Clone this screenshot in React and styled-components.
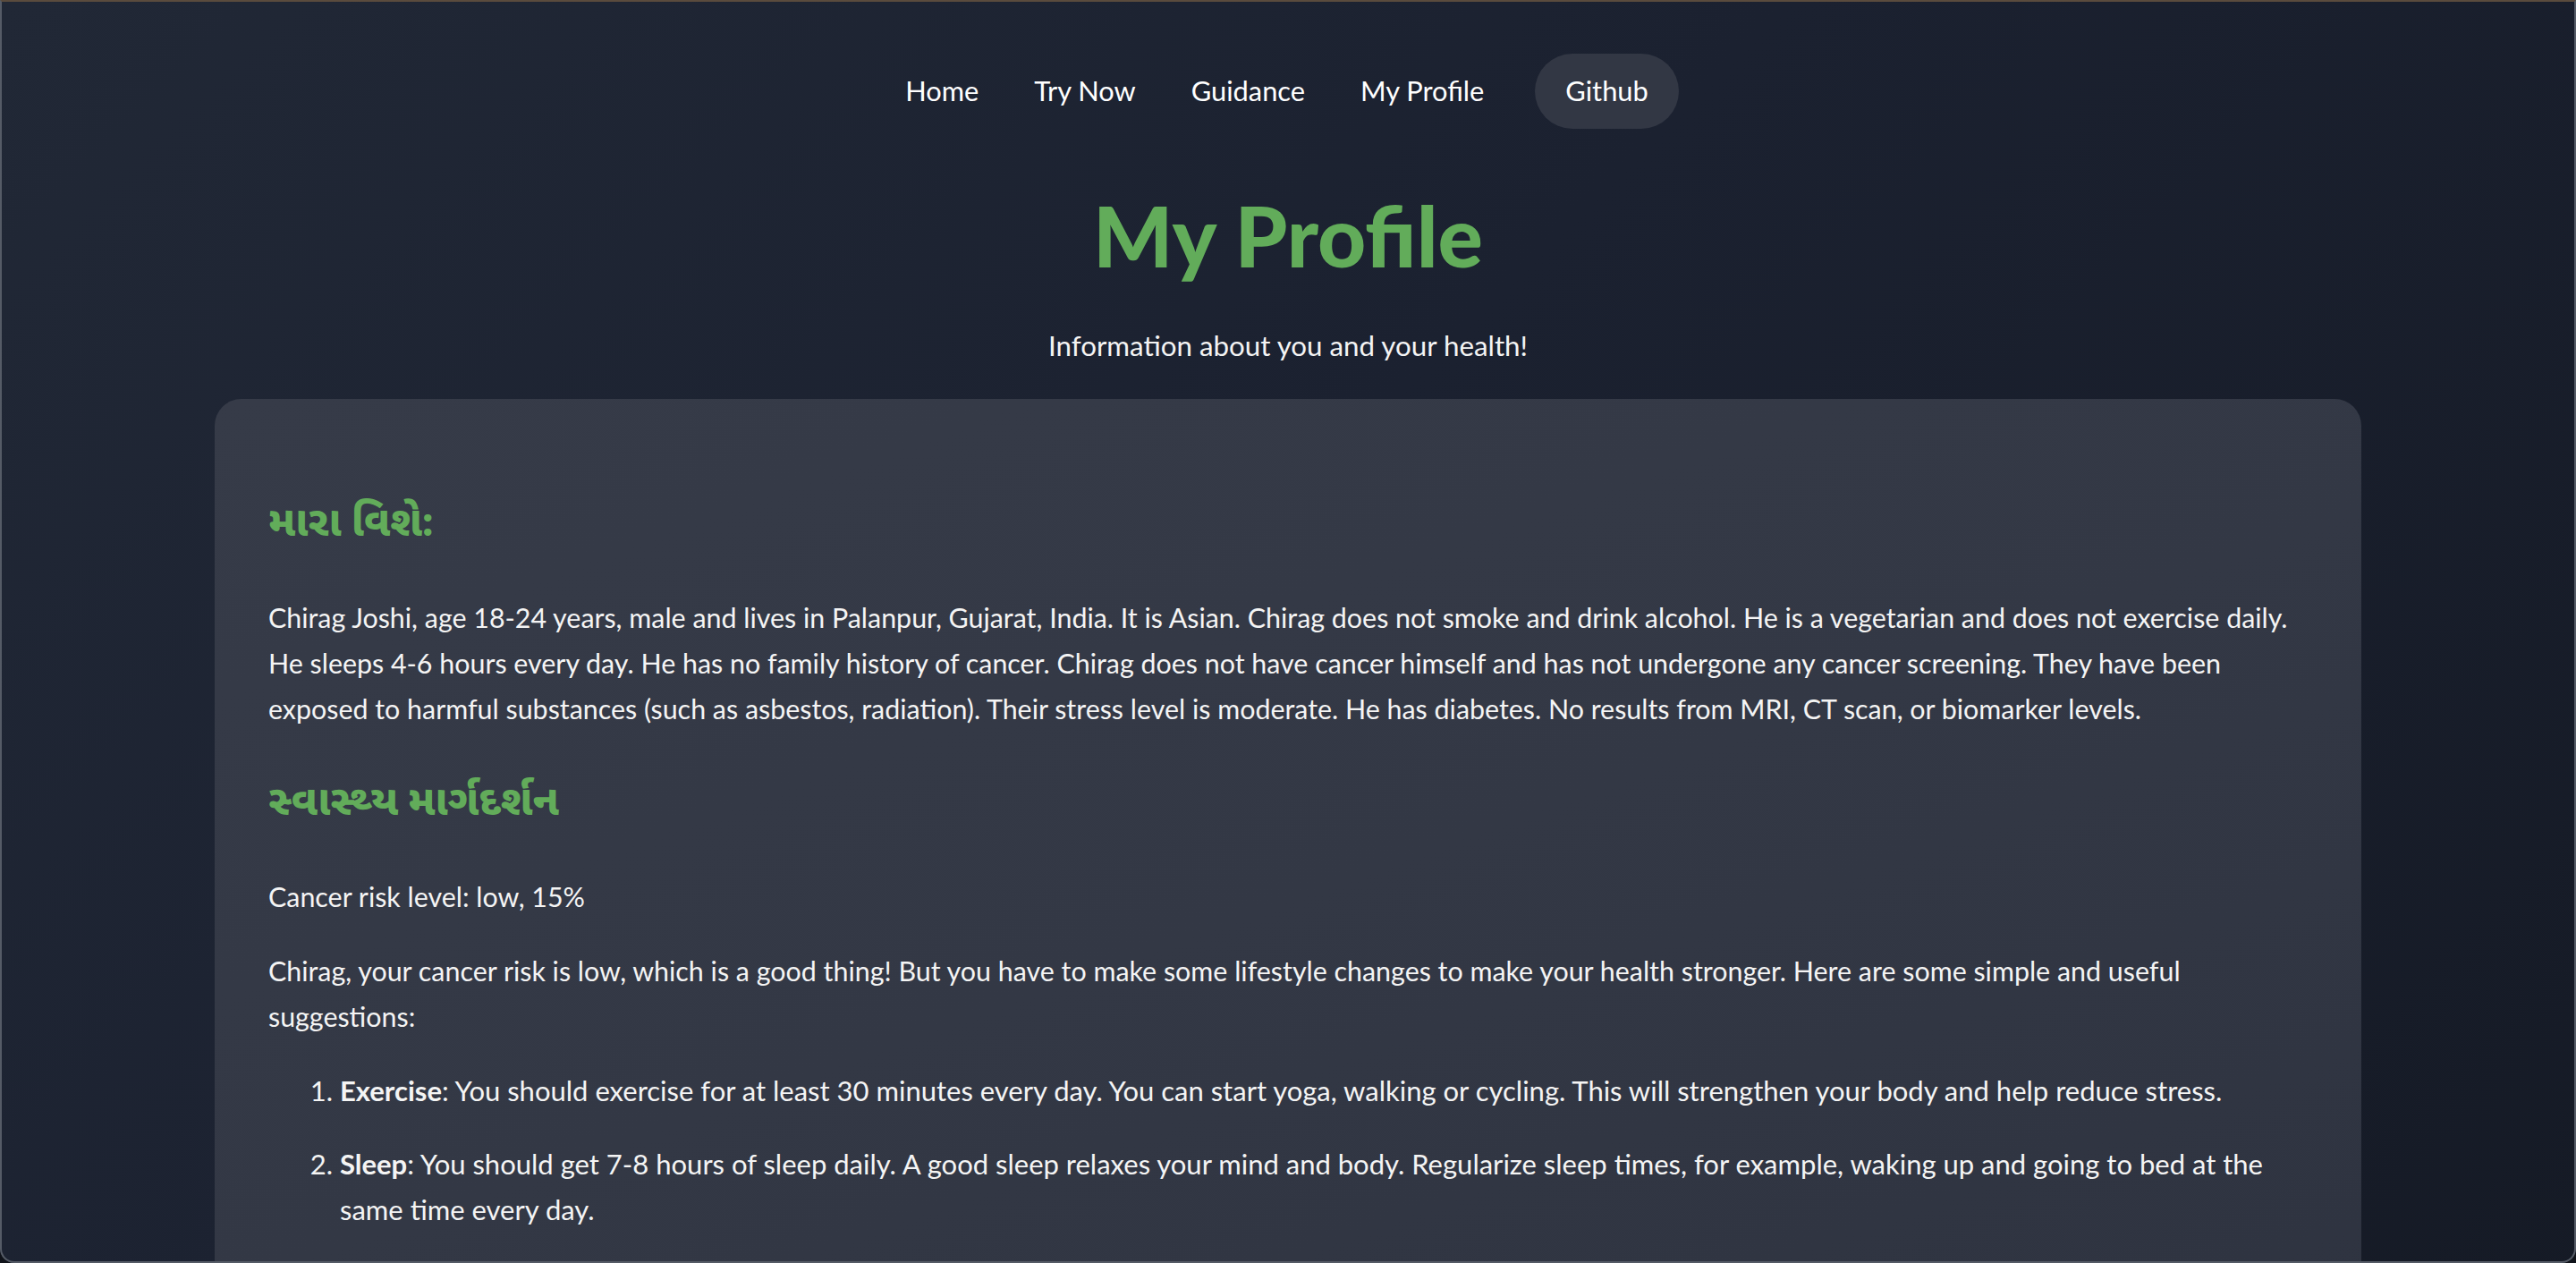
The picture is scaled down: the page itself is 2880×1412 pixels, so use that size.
import React from "react";
import styled, { createGlobalStyle } from "styled-components";

const Global = createGlobalStyle`
  html, body { margin: 0; padding: 0; background: #1b2130; }
  * { box-sizing: border-box; }
`;

const Frame = styled.div`
  position: fixed;
  inset: 0;
  pointer-events: none;
  border: 2px solid #555b66;
  border-top-color: #5a4b3d;
  border-radius: 0 0 16px 16px;
  box-shadow: 0 0 0 30px #10131a;
`;

const Page = styled.div`
  min-height: 100vh;
  background: linear-gradient(135deg, #212836 0%, #1b2130 45%, #151a25 100%);
  color: #f4f4f4;
  font-family: "Lato", "Noto Sans Gujarati", "Lohit Gujarati", "Noto Sans", sans-serif;
  display: flex;
  flex-direction: column;
  align-items: center;
  padding-top: 60px;
  overflow: hidden;
`;

const Nav = styled.nav`
  display: flex;
  align-items: center;
  margin-right: 22px;
`;

const NavLink = styled.a`
  display: block;
  padding: 0 ${(p) => (p.$active ? "34px" : "31px")};
  height: 84px;
  line-height: 84px;
  border-radius: 42px;
  font-size: 30.8px;
  color: #ffffff;
  text-decoration: none;
  background: ${(p) => (p.$active ? "#323744" : "transparent")};
  margin-left: ${(p) => (p.$active ? "26px" : "0")};
`;

const Title = styled.h1`
  margin: 64px 0 0;
  font-size: 94px;
  line-height: 110px;
  font-weight: 900;
  color: #62ac5a;
`;

const Subtitle = styled.p`
  margin: 46px 0 0;
  font-size: 31.3px;
  line-height: 45px;
`;

const Card = styled.section`
  margin-top: 37px;
  width: 2400px;
  padding: 60px 60px 160px;
  border-radius: 30px;
  background: linear-gradient(160deg, #363b48 0%, #333845 50%, #2e3340 100%);
`;

const Heading = styled.h2`
  margin: 44px 0 53px;
  font-size: 47px;
  line-height: 62px;
  font-weight: 800;
  color: #62ac5a;
`;

const Para = styled.p`
  margin: 32px 0;
  font-size: 30.4px;
  line-height: 51px;
`;

const List = styled.ol`
  margin: 32px 0;
  padding-left: 80px;
  font-size: 31px;
  line-height: 51px;
`;

const Item = styled.li`
  margin-bottom: 31px;
  b { font-weight: 700; }
`;

export default function App() {
  return (
    <Page>
      <Global />
      <Frame />
      <Nav>
        <NavLink href="#">Home</NavLink>
        <NavLink href="#">Try Now</NavLink>
        <NavLink href="#">Guidance</NavLink>
        <NavLink href="#">My Profile</NavLink>
        <NavLink href="#" $active>Github</NavLink>
      </Nav>
      <Title>My Profile</Title>
      <Subtitle>Information about you and your health!</Subtitle>
      <Card>
        <Heading>મારા વિશે:</Heading>
        <Para>
          Chirag Joshi, age 18-24 years, male and lives in Palanpur, Gujarat, India. It is Asian. Chirag does not smoke and drink alcohol. He is a vegetarian and does not exercise daily. He sleeps 4-6 hours every day. He has no family history of cancer. Chirag does not have cancer himself and has not undergone any cancer screening. They have been exposed to harmful substances (such as asbestos, radiation). Their stress level is moderate. He has diabetes. No results from MRI, CT scan, or biomarker levels.
        </Para>
        <Heading>સ્વાસ્થ્ય માર્ગદર્શન</Heading>
        <Para>Cancer risk level: low, 15%</Para>
        <Para>
          Chirag, your cancer risk is low, which is a good thing! But you have to make some lifestyle changes to make your health stronger. Here are some simple and useful suggestions:
        </Para>
        <List>
          <Item>
            <b>Exercise</b>: You should exercise for at least 30 minutes every day. You can start yoga, walking or cycling. This will strengthen your body and help reduce stress.
          </Item>
          <Item>
            <b>Sleep</b>: You should get 7-8 hours of sleep daily. A good sleep relaxes your mind and body. Regularize sleep times, for example, waking up and going to bed at the same time every day.
          </Item>
        </List>
      </Card>
    </Page>
  );
}
